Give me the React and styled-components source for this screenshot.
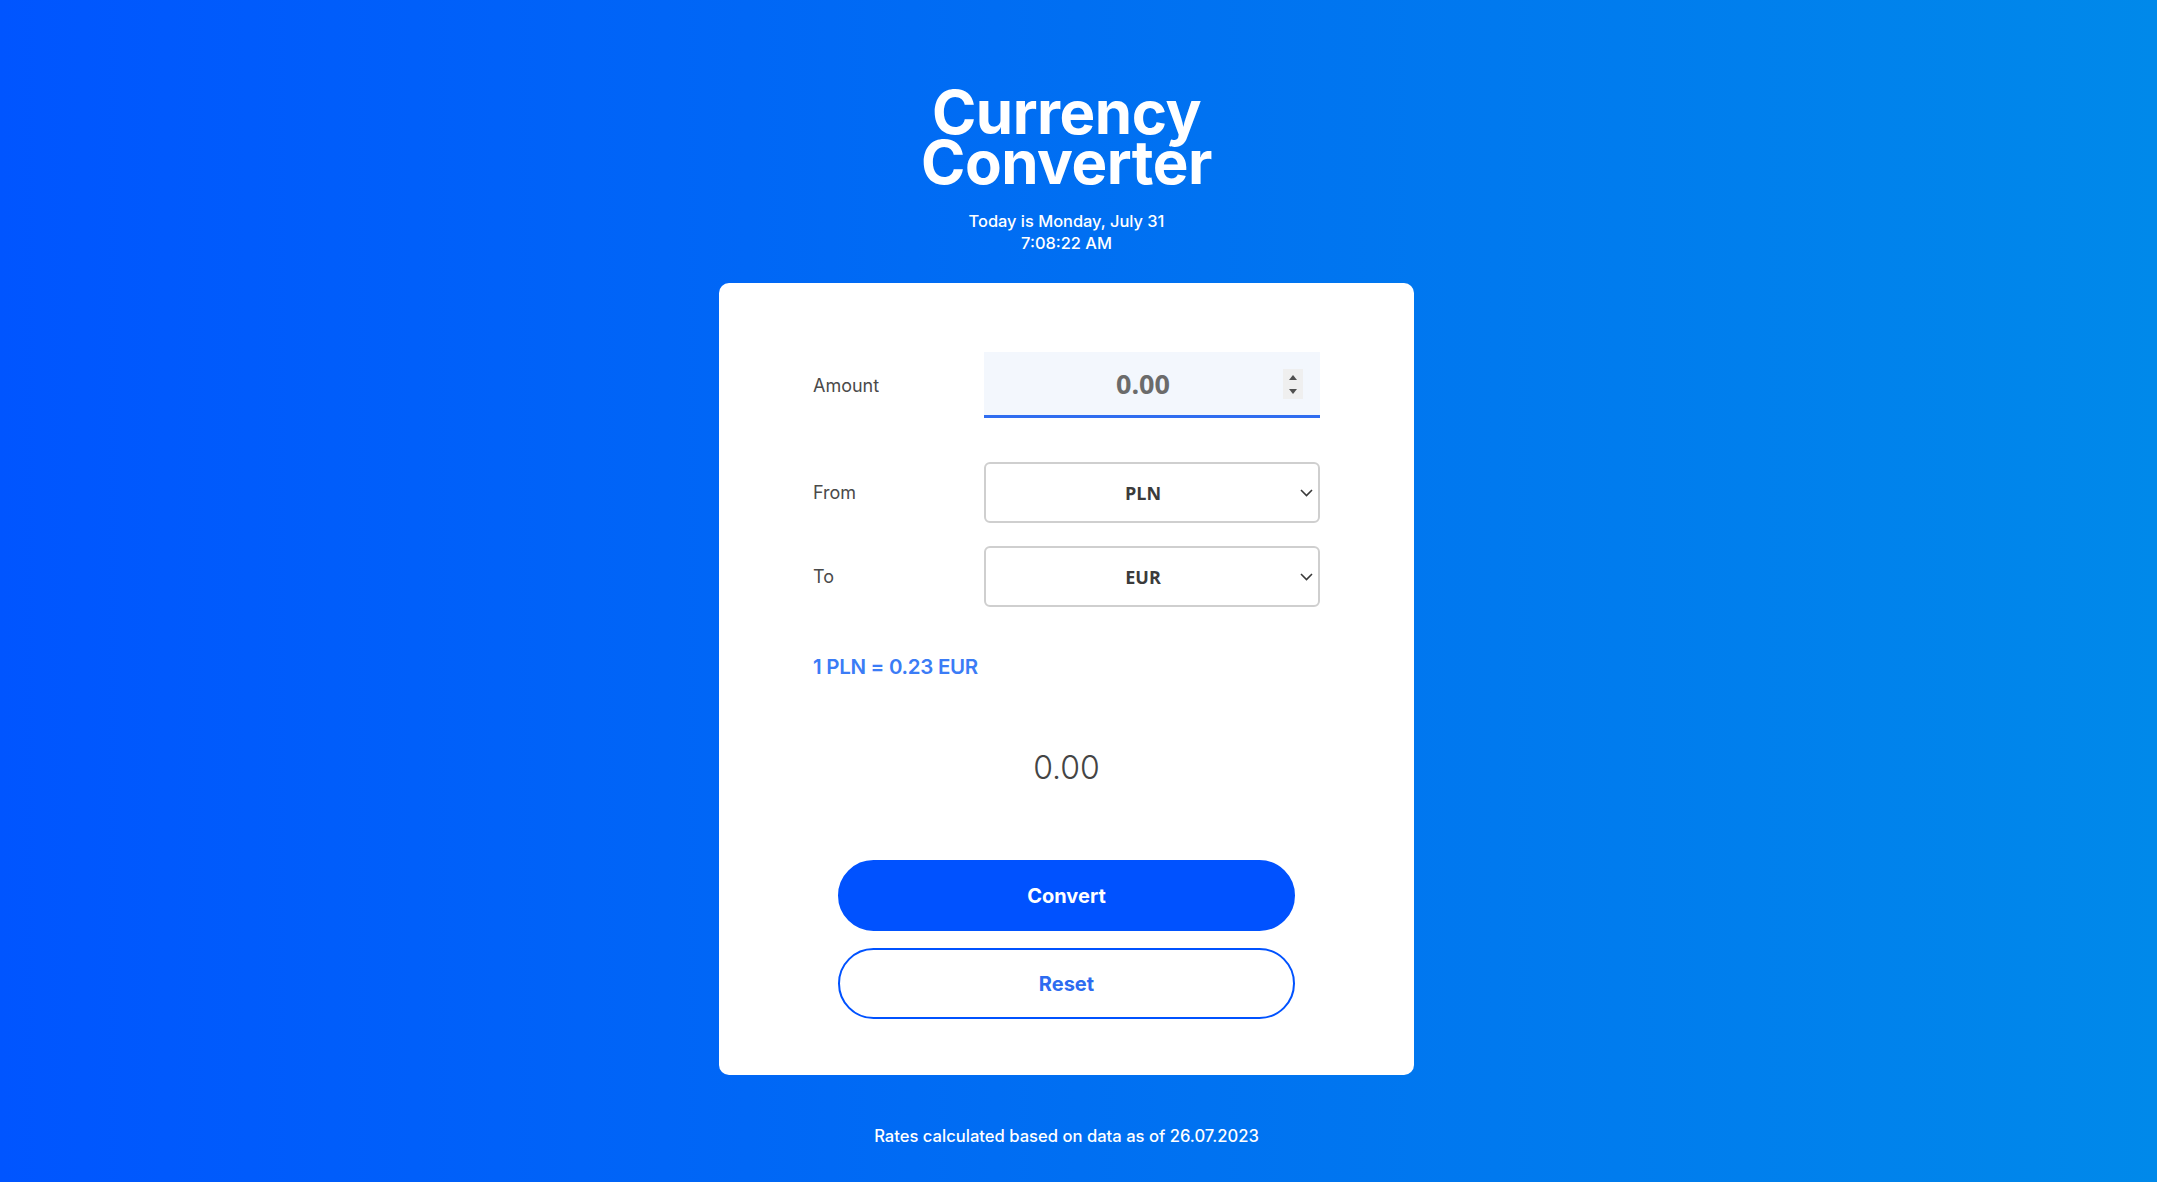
import React, { useState } from "react";
import styled, { createGlobalStyle } from "styled-components";

const GlobalStyle = createGlobalStyle`
  * {
    box-sizing: border-box;
  }
  body {
    margin: 0;
    font-family: "Inter", "Noto Sans", sans-serif;
  }
`;

const rates = { PLN: 1, EUR: 0.23, USD: 0.25, GBP: 0.19 };

export default function App() {
  const [amount, setAmount] = useState("0.00");
  const [from, setFrom] = useState("PLN");
  const [to, setTo] = useState("EUR");
  const [result, setResult] = useState("0.00");

  const rate = (rates[to] / rates[from]).toFixed(2);

  function handleConvert() {
    const value = parseFloat(amount) || 0;
    setResult((value * rate).toFixed(2));
  }

  function handleReset() {
    setAmount("0.00");
    setResult("0.00");
  }

  return (
    <Page>
      <GlobalStyle />
      <Header>
        <Title>
          <TitleLine>Currency</TitleLine>
          <TitleLine>Converter</TitleLine>
        </Title>
        <Today>
          Today is Monday, July 31
          <br />
          7:08:22 AM
        </Today>
      </Header>

      <Card>
        <Row $spacing="44px">
          <Label>Amount</Label>
          <Field>
            <AmountInput
              type="text"
              inputMode="decimal"
              value={amount}
              onChange={(e) => setAmount(e.target.value)}
            />
            <Spinner>
              <svg width="8" height="5" viewBox="0 0 8 5">
                <path d="M4 0 L8 5 L0 5 Z" fill="#505050" />
              </svg>
              <svg width="8" height="5" viewBox="0 0 8 5">
                <path d="M0 0 L8 0 L4 5 Z" fill="#505050" />
              </svg>
            </Spinner>
          </Field>
        </Row>

        <Row $spacing="23px">
          <Label>From</Label>
          <Field>
            <Select value={from} onChange={(e) => setFrom(e.target.value)}>
              {Object.keys(rates).map((code) => (
                <option key={code}>{code}</option>
              ))}
            </Select>
            <Chevron />
          </Field>
        </Row>

        <Row>
          <Label>To</Label>
          <Field>
            <Select value={to} onChange={(e) => setTo(e.target.value)}>
              {Object.keys(rates).map((code) => (
                <option key={code}>{code}</option>
              ))}
            </Select>
            <Chevron />
          </Field>
        </Row>

        <Rate>
          1 {from} = {rate} {to}
        </Rate>

        <Result>{result}</Result>

        <Buttons>
          <Button onClick={handleConvert}>Convert</Button>
          <Button $outline onClick={handleReset}>
            Reset
          </Button>
        </Buttons>
      </Card>

      <Footer>Rates calculated based on data as of 26.07.2023</Footer>
    </Page>
  );
}

function Chevron() {
  return (
    <ChevronIcon width="13" height="8" viewBox="0 0 13 8">
      <path
        d="M1 1 L6.5 6.5 L12 1"
        fill="none"
        stroke="#3a3a3a"
        strokeWidth="1.6"
      />
    </ChevronIcon>
  );
}

// right padding stands in for the width the browser scrollbar takes in the reference
const Page = styled.main`
  min-height: 1182px;
  display: flex;
  flex-direction: column;
  align-items: center;
  padding: 87px 24px 81px 0;
  background: linear-gradient(to right, #0055ff 0%, #006ff2 50%, #0089ea 100%);
  color: #ffffff;
`;

const Header = styled.header`
  display: flex;
  flex-direction: column;
  align-items: center;
  gap: 23px;
  margin-bottom: 29px;
`;

const Title = styled.h1`
  margin: 0;
  font-size: 60px;
  font-weight: 700;
  letter-spacing: -0.5px;
  text-align: center;
`;

const TitleLine = styled.span`
  display: block;
  height: 50px;
  line-height: 50px;
`;

const Today = styled.p`
  margin: 0;
  font-size: 16.4px;
  line-height: 22px;
  font-weight: 500;
  text-align: center;
`;

const Card = styled.section`
  width: 695px;
  background-color: #ffffff;
  border-radius: 10px;
  padding: 69px 94px 56px;
  display: flex;
  flex-direction: column;
  color: #444444;
`;

const Row = styled.div`
  display: grid;
  grid-template-columns: 171px 1fr;
  align-items: center;
  margin-bottom: ${(p) => p.$spacing || "0"};
`;

const Label = styled.label`
  font-size: 18px;
  font-weight: 400;
  color: #4a4a4a;
`;

const Field = styled.div`
  position: relative;
  display: flex;
  align-items: center;
`;

const AmountInput = styled.input`
  width: 100%;
  height: 66px;
  border: none;
  border-bottom: 3px solid #2f6df0;
  background-color: #f3f7fd;
  outline: none;
  padding: 0 28px 0 10px;
  text-align: center;
  font-family: "Open Sans", "Liberation Sans", sans-serif;
  font-size: 27px;
  font-weight: 700;
  color: #6b6b6b;
`;

const Spinner = styled.div`
  position: absolute;
  right: 17px;
  top: 17px;
  width: 20px;
  height: 30px;
  background-color: #efefef;
  display: flex;
  flex-direction: column;
  align-items: center;
  justify-content: center;
  gap: 9px;
`;

const Select = styled.select`
  width: 100%;
  height: 61px;
  appearance: none;
  -webkit-appearance: none;
  border: 2px solid #cfcfcf;
  border-radius: 6px;
  background-color: #ffffff;
  padding: 0 28px 0 10px;
  text-align: center;
  text-align-last: center;
  font-family: "Open Sans", "Liberation Sans", sans-serif;
  font-size: 18px;
  font-weight: 700;
  color: #3b3b3b;
  outline: none;
`;

const ChevronIcon = styled.svg`
  position: absolute;
  right: 7px;
  top: 50%;
  transform: translateY(-50%);
  pointer-events: none;
`;

const Rate = styled.p`
  margin: 45px 0 0;
  font-size: 20.5px;
  line-height: 30px;
  font-weight: 600;
  color: #3b7cf6;
  letter-spacing: -0.3px;
`;

const Result = styled.p`
  margin: 62px 0 0;
  font-size: 32px;
  line-height: 48px;
  font-weight: 300;
  text-align: center;
  color: #444444;
`;

const Buttons = styled.div`
  margin-top: 68px;
  display: flex;
  flex-direction: column;
  align-items: center;
  gap: 17px;
`;

const Button = styled.button`
  width: 90%;
  height: 71px;
  border-radius: 36px;
  border: 2px solid #0052ff;
  background-color: ${(p) => (p.$outline ? "#ffffff" : "#0052ff")};
  color: ${(p) => (p.$outline ? "#2d6bf0" : "#ffffff")};
  font-family: "Inter", sans-serif;
  font-size: 20px;
  font-weight: 700;
  cursor: pointer;
`;

const Footer = styled.footer`
  margin-top: 50px;
  font-size: 16.6px;
  line-height: 22px;
  font-weight: 500;
  text-align: center;
`;
